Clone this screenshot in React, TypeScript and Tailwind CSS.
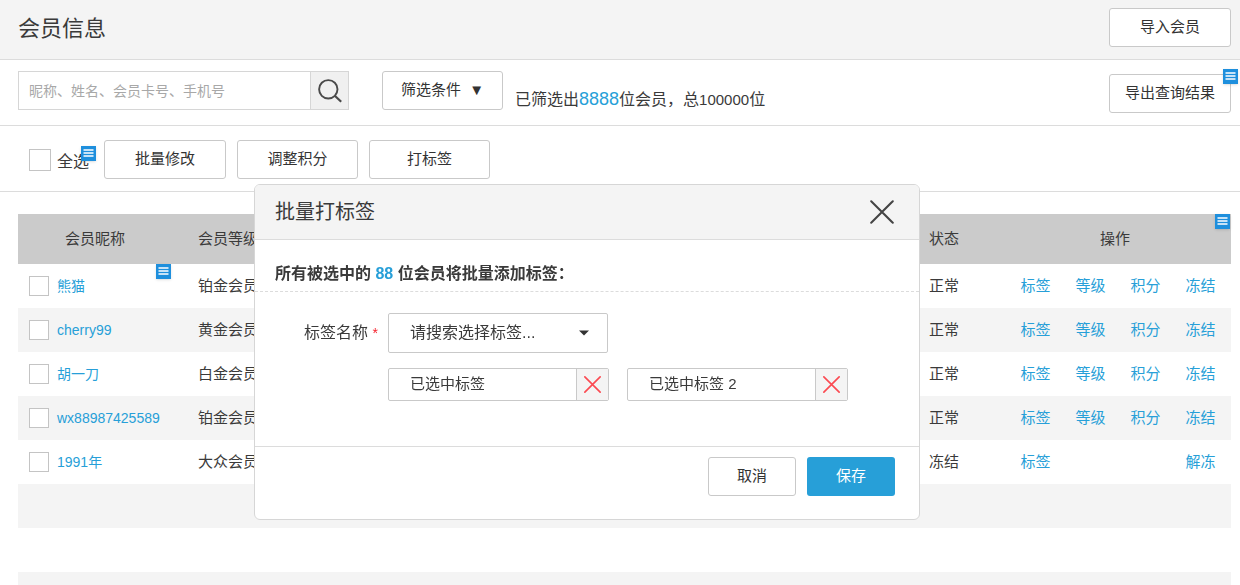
import { useState } from "react";

type Member = {
  name: string;
  level: string;
  status: string;
  actions: string[];
  note?: boolean;
};

const members: Member[] = [
  { name: "熊猫", level: "铂金会员", status: "正常", actions: ["标签", "等级", "积分", "冻结"], note: true },
  { name: "cherry99", level: "黄金会员", status: "正常", actions: ["标签", "等级", "积分", "冻结"] },
  { name: "胡一刀", level: "白金会员", status: "正常", actions: ["标签", "等级", "积分", "冻结"] },
  { name: "wx88987425589", level: "铂金会员", status: "正常", actions: ["标签", "等级", "积分", "冻结"] },
  { name: "1991年", level: "大众会员", status: "冻结", actions: ["标签", "", "", "解冻"] },
];

const emptyRows = [0, 1, 2];

const btn = "h-[39px] rounded-[3px] border border-[#c9c9c9] bg-white text-[15px] text-[#333]";
const checkbox = "shrink-0 appearance-none border border-[#c4c4c4] bg-white checked:bg-[#279fd8]";

function NoteMark({ className }: { className: string }) {
  return (
    <svg
      viewBox="0 0 15 15"
      className={`absolute h-[15px] w-[15px] shadow-sm ${className}`}
      aria-hidden="true"
    >
      <rect width="15" height="15" fill="#1e8fdd" />
      <path d="M2.5 4h10M2.5 7h10M2.5 10h10" stroke="#fff" strokeWidth="1.3" />
    </svg>
  );
}

function Cross({ size, color, width }: { size: number; color: string; width: number }) {
  return (
    <svg width={size} height={size} viewBox="0 0 24 24" fill="none" stroke={color} strokeWidth={width} strokeLinecap="round">
      <path d="M1.2 1.2l21.6 21.6M22.8 1.2L1.2 22.8" />
    </svg>
  );
}

function Tag({ label, onRemove }: { label: string; onRemove: () => void }) {
  return (
    <div className="flex h-[33px] w-[221px] rounded-[2px] border border-[#c9c9c9]">
      <span className="flex flex-1 items-center pl-[21px] text-[15px]">{label}</span>
      <button
        type="button"
        aria-label={`移除${label}`}
        onClick={onRemove}
        className="flex w-8 items-center justify-center border-l border-[#c9c9c9] bg-[#f4f4f4]"
      >
        <Cross size={17} color="#fb4a52" width={2.3} />
      </button>
    </div>
  );
}

function TagDialog({ onClose }: { onClose: () => void }) {
  const [tags, setTags] = useState(["已选中标签", "已选中标签 2"]);

  return (
    <div className="fixed inset-0 flex items-start justify-center pt-[184px] pr-[66px]">
      <div
        role="dialog"
        aria-labelledby="dialog-title"
        className="w-[666px] overflow-hidden rounded-md border border-[#d6d6d6] bg-white"
      >
        <div className="flex h-[55px] items-center justify-between border-b border-[#dcdcdc] bg-[#f4f4f4] pr-[25px] pl-5">
          <h2 id="dialog-title" className="text-xl">批量打标签</h2>
          <button type="button" aria-label="关闭" onClick={onClose}>
            <Cross size={24} color="#444" width={2} />
          </button>
        </div>

        <p className="flex h-[52px] items-end border-b border-dashed border-[#dcdcdc] pb-[5px] pl-5 text-base font-bold">
          <span>
            所有被选中的 <span className="text-[#279fd8]">88</span> 位会员将批量添加标签：
          </span>
        </p>

        <div className="flex pt-[21px] pb-[45px]">
          <label htmlFor="tag" className="w-[133px] pr-2.5 text-right text-base leading-10">
            标签名称 <span className="text-sm text-[#f5222d]">*</span>
          </label>
          <div className="flex-1">
            <div className="relative w-[220px]">
              <select
                id="tag"
                className="h-10 w-full appearance-none rounded-[2px] border border-[#c9c9c9] bg-white pl-[21px] text-base"
              >
                <option>请搜索选择标签...</option>
              </select>
              <svg viewBox="0 0 12 6" className="pointer-events-none absolute top-[17px] right-[18px] h-1.5 w-3">
                <path d="M1 0.5h10L6 5.5z" fill="#333" />
              </svg>
            </div>
            <div className="mt-[15px] flex flex-wrap gap-[18px]">
              {tags.map((tag) => (
                <Tag key={tag} label={tag} onRemove={() => setTags(tags.filter((t) => t !== tag))} />
              ))}
            </div>
          </div>
        </div>

        <div className="flex justify-end gap-[11px] border-t border-[#dcdcdc] pt-2.5 pr-6 pb-[23px]">
          <button type="button" onClick={onClose} className={`w-[88px] ${btn}`}>取消</button>
          <button type="button" className="h-[39px] w-[88px] rounded-[3px] bg-[#279fd8] text-[15px] text-white">
            保存
          </button>
        </div>
      </div>
    </div>
  );
}

export default function App() {
  const [open, setOpen] = useState(true);

  return (
    <div className="h-screen overflow-hidden bg-white font-['Liberation_Sans','Noto_Sans_CJK_SC',sans-serif] text-[#3a3a3a]">
      <header className="flex h-[60px] items-start justify-between border-b border-[#dcdcdc] bg-[#f4f4f4] pt-2 pr-[9px] pl-[18px]">
        <h1 className="text-[22px] leading-[42px]">会员信息</h1>
        <button type="button" className={`w-[122px] ${btn}`}>导入会员</button>
      </header>

      <div className="flex h-[66px] items-start border-b border-[#dcdcdc] pt-[11px] pr-[9px] pl-[18px]">
        <form className="flex h-[39px] w-[331px] border border-[#d6d6d6]" onSubmit={(e) => e.preventDefault()}>
          <input
            type="text"
            aria-label="搜索会员"
            placeholder="昵称、姓名、会员卡号、手机号"
            className="min-w-0 flex-1 pl-2.5 text-sm outline-none placeholder:text-[#a8a8a8]"
          />
          <button
            type="submit"
            aria-label="搜索"
            className="flex w-[38px] items-center justify-center border-l border-[#d6d6d6] bg-[#f0f0f0]"
          >
            <svg width="24" height="24" viewBox="0 0 24 24" fill="none" stroke="#4a4a4a" strokeWidth="1.9">
              <circle cx="10.3" cy="10.3" r="9.2" />
              <path d="M16.8 16.8l6.4 6" strokeWidth="2.2" />
            </svg>
          </button>
        </form>
        <button type="button" className={`ml-[33px] w-[121px] ${btn}`}>
          筛选条件 <span className="ml-1">▼</span>
        </button>
        <p className="ml-3 pt-4 text-base">
          已筛选出<span className="text-lg leading-6 text-[#279fd8]">8888</span>位会员，总
          <span className="text-[15px]">100000</span>位
        </p>
        <div className="relative mt-[3px] ml-auto">
          <button type="button" className={`w-[122px] ${btn}`}>导出查询结果</button>
          <NoteMark className="-top-[5px] -right-[7px]" />
        </div>
      </div>

      <div className="flex h-[66px] items-start gap-[11px] border-b border-[#dcdcdc] pt-3.5 pl-[29px]">
        <label className="relative mr-1 flex h-10 items-center gap-1.5 text-base">
          <input type="checkbox" className={`h-[22px] w-[22px] ${checkbox}`} />
          <span className="pt-1">全选</span>
          <NoteMark className="top-1.5 -right-[7px]" />
        </label>
        <button type="button" className={`w-[122px] ${btn}`}>批量修改</button>
        <button type="button" className={`w-[121px] ${btn}`}>调整积分</button>
        <button type="button" onClick={() => setOpen(true)} className={`w-[121px] ${btn}`}>打标签</button>
      </div>

      <div className="relative pt-[22px] pr-[9px] pl-[18px]">
        <table className="w-full table-fixed text-[15px]">
          <colgroup>
            <col className="w-[154px]" />
            <col className="w-[112px]" />
            <col />
            <col className="w-[110px]" />
            <col className="w-[232px]" />
          </colgroup>
          <thead>
            <tr className="h-[50px] bg-[#cbcbcb]">
              <th className="font-normal">会员昵称</th>
              <th className="font-normal">会员等级</th>
              <td />
              <th className="font-normal">状态</th>
              <th className="font-normal">操作</th>
            </tr>
          </thead>
          <tbody>
            {members.map((m) => (
              <tr key={m.name} className="h-11 even:bg-[#f4f4f4]">
                <td className="relative pl-[11px]">
                  <div className="flex items-center gap-2">
                    <input type="checkbox" aria-label={m.name} className={`h-5 w-5 ${checkbox}`} />
                    <a href="#" className="text-sm text-[#279fd8]">{m.name}</a>
                  </div>
                  {m.note && <NoteMark className="top-0 right-px" />}
                </td>
                <td className="text-center">{m.level}</td>
                <td />
                <td className="text-center">{m.status}</td>
                <td className="pr-[3px] pl-[9px]">
                  <div className="grid grid-cols-4 text-center">
                    {m.actions.map((action, i) =>
                      action ? (
                        <a key={i} href="#" className="text-[#279fd8]">{action}</a>
                      ) : (
                        <span key={i} />
                      )
                    )}
                  </div>
                </td>
              </tr>
            ))}
            {emptyRows.map((row) => (
              <tr key={row} className="h-11 even:bg-[#f4f4f4]">
                <td colSpan={5} />
              </tr>
            ))}
          </tbody>
        </table>
        <NoteMark className="top-[22px] right-2.5" />
      </div>

      {open && <TagDialog onClose={() => setOpen(false)} />}
    </div>
  );
}
